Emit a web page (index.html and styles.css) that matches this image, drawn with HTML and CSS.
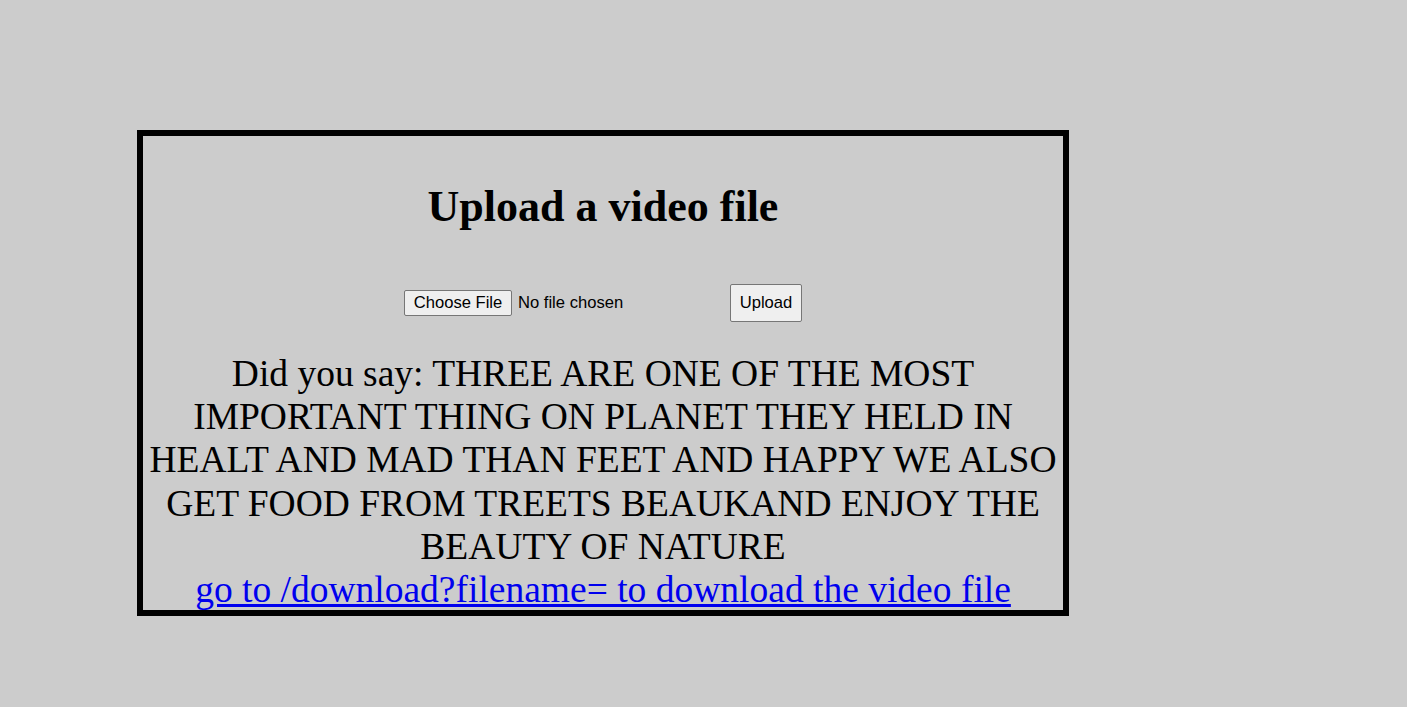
FILE: index.html
```html
<!DOCTYPE html>
<html lang="en">
<head>
<meta charset="utf-8">
<title>Upload a video file</title>
<link rel="stylesheet" href="styles.css">
</head>
<body>
<div class="box">
  <h1 class="title">Upload a video file</h1>
  <form class="upload-form">
    <input class="file-input" type="file" name="file">
    <button class="upload-btn" type="button">Upload</button>
  </form>
  <p class="result">Did you say: THREE ARE ONE OF THE MOST IMPORTANT THING ON PLANET THEY HELD IN HEALT AND MAD THAN FEET AND HAPPY WE ALSO GET FOOD FROM TREETS BEAUKAND ENJOY THE BEAUTY OF NATURE<br><a class="dl-link" href="#">go to /download?filename= to download the video file</a></p>
</div>
</body>
</html>
```

FILE: styles.css
```css
html, body {
  margin: 0;
  padding: 0;
  background: #cccccc;
}

body {
  font-family: "Liberation Serif", "Times New Roman", serif;
  color: #000;
}

.box {
  margin: 130px 0 0 137px;
  width: 920px;
  height: 474px;
  border: 6px solid #000;
  text-align: center;
  overflow: hidden;
}

.title {
  margin: 46px 0 0;
  font-size: 44px;
  line-height: 50px;
  font-weight: bold;
}

.upload-form {
  margin: 52px 0 0;
  display: flex;
  justify-content: center;
  align-items: center;
  height: 38px;
}

.file-input {
  width: 326px;
  font-family: "Liberation Sans", Arial, sans-serif;
  font-size: 16.6px;
  color: #000;
  text-align: left;
}

.file-input::file-selector-button {
  width: 108px;
  height: 26px;
  padding: 0;
  margin-right: 6px;
  font-family: "Liberation Sans", Arial, sans-serif;
  font-size: 16.6px;
  color: #000;
  background: #efefef;
  border: 1px solid #767676;
  border-radius: 2px;
}

.upload-btn {
  width: 72px;
  height: 38px;
  padding: 0;
  font-family: "Liberation Sans", Arial, sans-serif;
  font-size: 16.6px;
  color: #000;
  background: #efefef;
  border: 1px solid #767676;
  border-radius: 2px;
}

.result {
  margin: 30px 0 0;
  font-size: 37.5px;
  line-height: 43.2px;
}

.dl-link {
  color: #0000ee;
  text-decoration: underline;
}
```
